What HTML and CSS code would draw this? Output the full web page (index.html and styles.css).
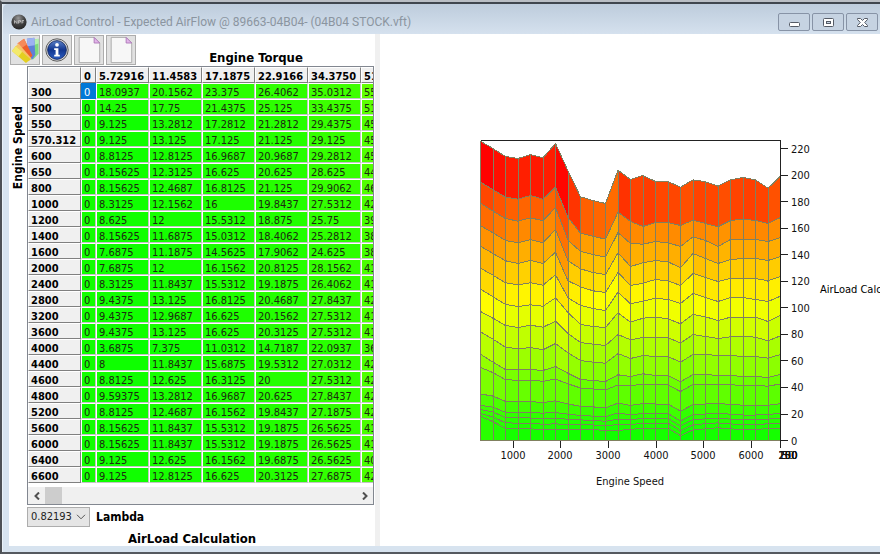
FILE: index.html
```html
<!DOCTYPE html>
<html lang="en">
<head>
<meta charset="utf-8">
<title>AirLoad Control</title>
<link rel="stylesheet" href="styles.css">
</head>
<body>
<div class="window">
  <header class="titlebar">
    <svg class="app-icon" viewBox="0 0 16 16" aria-hidden="true">
      <defs><radialGradient id="ball" cx=".45" cy=".25" r=".8"><stop offset="0" stop-color="#999"/><stop offset=".5" stop-color="#444"/><stop offset="1" stop-color="#222"/></radialGradient></defs>
      <circle cx="8" cy="8" r="7.6" fill="url(#ball)"/>
      <path d="M3.5 9.5V6.5L6 9.5V6.5M7.5 9.5V6.5H9.5V8H7.5M11 9.5V6.5H13M11 8h1.5" stroke="#bbb" stroke-width=".9" fill="none"/>
    </svg>
    <h1>AirLoad Control - Expected AirFlow @ 89663-04B04- (04B04 STOCK.vft)</h1>
    <div class="window-buttons">
      <button aria-label="Minimize"><svg viewBox="0 0 13 11"><rect x="1.5" y="5.5" width="10" height="4" rx="1" fill="#fff" stroke="#555b66"/></svg></button>
      <button aria-label="Maximize"><svg viewBox="0 0 13 11"><rect x="1.5" y="1.5" width="10" height="8" rx="1" fill="#fff" stroke="#555b66"/><rect x="4.5" y="4.5" width="4" height="2" fill="#c6d3e2" stroke="#555b66"/></svg></button>
      <button aria-label="Close"><svg viewBox="0 0 13 11"><path d="M1.5 1.5H4.5L6.5 3.5 8.5 1.5H11.5V2.5L8.7 5.5 11.5 8.5V9.5H8.5L6.5 7.5 4.5 9.5H1.5V8.5L4.3 5.5 1.5 2.5Z" fill="#fff" stroke="#555b66"/></svg></button>
    </div>
  </header>
  <main class="content">
    <section class="table-pane">
      <div class="toolbar">
        <button class="tool" aria-label="Colours">
          <svg viewBox="0 0 30 30">
            <path d="M21 25 24 4 29.500 3V19L24 25Z" fill="#7fdc7f"/>
            <path d="M24 4 29.500 3V8L23.500 10Z" fill="#b6f0b0"/>
            <path d="M20 25 17 3 25 2 26 20 23 25Z" fill="#5f80d8"/>
            <path d="M17 3 25 2 25.500 10 18 11Z" fill="#9db2f2"/>
            <path d="M20 25 7 8 14 3 23 21Z" fill="#ee5f2c"/>
            <path d="M7 8 14 3 17 9 11 13Z" fill="#f58a5a"/>
            <path d="M19 27 4 12 8 8 22 24Z" fill="#f6c46a"/>
            <path d="M1 16 5 11 21 25 16 29Z" fill="#e3cf20"/>
            <path d="M1 16 5 11 12 17 8 22Z" fill="#f3e96c"/>
          </svg>
        </button>
        <button class="tool" aria-label="Information">
          <svg viewBox="0 0 30 30">
            <defs><linearGradient id="info" x2="0" y2="1"><stop offset="0" stop-color="#5a80c8"/><stop offset=".5" stop-color="#12368f"/><stop offset="1" stop-color="#2c5fc4"/></linearGradient></defs>
            <circle cx="15" cy="15" r="12" fill="#d8d8d8" stroke="#555"/>
            <circle cx="15" cy="15" r="10" fill="url(#info)" stroke="#142a66"/>
            <circle cx="15" cy="9.5" r="2" fill="#fff"/>
            <path d="M12 13h4.500v7H18v2h-6v-2h1.500v-5H12Z" fill="#fff"/>
          </svg>
        </button>
        <button class="tool" aria-label="New page">
          <svg viewBox="0 0 30 30"><path d="M4.500 1.500H20.500L26.500 7.500V28.500H4.500Z" fill="#f7f7f7" stroke="#aaa"/><path d="M20.500 1.500V7.500H26.500Z" fill="#e3b5ea" stroke="#ad79b8"/></svg>
        </button>
        <button class="tool" aria-label="Copy page">
          <svg viewBox="0 0 30 30"><path d="M4.500 1.500H20.500L26.500 7.500V28.500H4.500Z" fill="#f7f7f7" stroke="#aaa"/><path d="M20.500 1.500V7.500H26.500Z" fill="#e3b5ea" stroke="#ad79b8"/></svg>
        </button>
        <h2>Engine Torque</h2>
      </div>
      <div class="table-area">
        <div class="row-title"><span>Engine Speed</span></div>
        <div class="table-column">
          <div class="table-frame">
            <div class="table-clip"><table id="airload"><thead></thead><tbody></tbody></table></div>
            <div class="scrollbar">
              <button aria-label="Scroll left"><svg viewBox="0 0 8 8"><path d="M6 0.500 2.500 4 6 7.500" /></svg></button>
              <div class="track"><div class="thumb"></div></div>
              <button aria-label="Scroll right"><svg viewBox="0 0 8 8"><path d="M2 0.500 5.500 4 2 7.500" /></svg></button>
            </div>
          </div>
          <div class="lambda">
            <div class="select-wrap">
              <select id="lambda"><option>0.82193</option></select>
              <svg viewBox="0 0 10 6" aria-hidden="true"><path d="M1 .8 5 4.800 9 .8"/></svg>
            </div>
            <label for="lambda">Lambda</label>
          </div>
          <h2 class="caption">AirLoad Calculation</h2>
        </div>
      </div>
    </section>
    <div class="splitter"></div>
    <section class="chart-pane">
      <svg id="chart" viewBox="380 34 436 512" role="img" aria-label="AirLoad surface chart"></svg>
      <span class="value-title">AirLoad Calculation</span>
    </section>
  </main>
</div>
<script src="script.js"></script>
</body>
</html>
```
FILE: styles.css
```css
* { box-sizing: border-box; }
html, body { height: 100%; margin: 0; overflow: hidden; }
body {
  font: 11px/14px "DejaVu Sans Condensed", "Noto Sans", sans-serif;
  color: #000;
}
button { padding: 0; font: inherit; }
h1, h2 { margin: 0; }
h2 { font-size: 13px; line-height: 14px; }

.window {
  height: 100%;
  display: flex;
  flex-direction: column;
  background: #d7e3ef;
  border-top: 2px solid #b9bec4;
  border-left: 2px solid #4d5055;
  border-bottom: 2px solid #55595f;
  padding: 0 0 6px 7px;
  box-shadow: inset 0 2px #3f464e, inset 1px 0 #e9f1f8;
}
.titlebar {
  flex: none;
  height: 30px;
  margin: 2px 0 0 -6px;
  padding: 6px 2px 0 8px;
  display: flex;
  align-items: center;
  background: linear-gradient(#bdccdc, #d5e1ee);
  border-top-left-radius: 5px;
}
.app-icon { width: 16px; height: 16px; margin-right: 4px; }
.titlebar h1 {
  flex: 1;
  font: 12px/16px Roboto, "Noto Sans", sans-serif;
  color: #8b95a0;
  white-space: nowrap;
}
.window-buttons { display: flex; gap: 2px; }
.window-buttons button {
  width: 32px;
  height: 18px;
  display: grid;
  place-items: center;
  background: #c6d3e2;
  border: 1px solid #8793a6;
  border-radius: 2px;
}
.window-buttons svg { width: 13px; height: 11px; }

.content { flex: 1; min-height: 0; display: flex; background: #fff; }
.table-pane { flex: none; width: 366px; padding: 1px 1px 0; }
.splitter { flex: none; width: 5px; background: #f0f0f0; }

.toolbar { display: flex; gap: 2px; height: 31px; }
.tool { width: 30px; height: 30px; background: #e1e1e1; border: 1px solid #adadad; }
.tool svg { display: block; width: 28px; height: 28px; }
.toolbar h2 { flex: 1; align-self: flex-end; text-align: center; padding-bottom: 1px; }

.table-area { display: flex; }
.row-title { flex: none; width: 17px; padding-top: 40px; }
.row-title span {
  display: block;
  writing-mode: vertical-rl;
  transform: rotate(180deg);
  font-size: 12px;
  line-height: 16px;
  font-weight: bold;
}
.table-column { flex: 1; min-width: 0; }
.table-frame { border: 1px solid #828790; }
.table-clip { overflow: hidden; }
table { width: 386px; table-layout: fixed; border-collapse: separate; border-spacing: 0; }
th, td { height: 16px; padding: 3px 0 0 2px; line-height: 11px; text-align: left; white-space: nowrap; overflow: hidden; }
th {
  background: #f0f0f0;
  border: 1px solid #808080;
  border-top-color: #fff;
  border-left-color: #fff;
}
td { color: #1c2a10; border: 1px solid #c4c4c4; border-top-color: #fff; border-left-color: #fff; }
td.selected { background: #0078d7; color: #fff; border-color: #0078d7; }
.scrollbar { display: flex; height: 17px; margin-top: 4px; background: #f0f0f0; }
.scrollbar button { width: 17px; border: 0; background: none; display: grid; place-items: center; }
.scrollbar svg { width: 8px; height: 8px; fill: none; stroke: #505050; stroke-width: 2; }
.track { flex: 1; display: flex; }
.thumb { width: 5%; min-width: 17px; background: #cdcdcd; }

.lambda { display: flex; align-items: center; gap: 6px; margin-top: 2px; }
.select-wrap { position: relative; }
select {
  display: block;
  appearance: none;
  width: 63px;
  height: 20px;
  padding: 0 3px;
  font: inherit;
  color: #222;
  background: #e5e5e5;
  border: 1px solid #adadad;
  border-radius: 0;
}
.select-wrap svg { position: absolute; right: 4px; top: 7px; width: 10px; height: 6px; fill: none; stroke: #555; pointer-events: none; }
.lambda label { font-size: 12px; font-weight: bold; }
.caption { text-align: center; margin: 5px 17px 0 0; }

.chart-pane { flex: 1; min-width: 0; overflow: hidden; display: flex; align-items: center; }
#chart { flex: none; width: 436px; height: 512px; margin-right: 4px; }
#chart text { font-size: 11px; fill: #111; }
#chart .face { stroke: #808060; stroke-width: 1; shape-rendering: crispEdges; }
#chart .axis { stroke: #222; fill: none; shape-rendering: crispEdges; }
.value-title { flex: none; white-space: nowrap; }
```
FILE: script.js
```js
const torque = ["0", "5.72916", "11.4583", "17.1875", "22.9166", "34.3750", "51.5625"];
const rows = `300 18.0937 20.1562 23.375 26.4062 35.0312 55.0312
500 14.25 17.75 21.4375 25.125 33.4375 51.1875
550 9.125 13.2812 17.2812 21.2812 29.4375 45.75
570.312 9.125 13.125 17.125 21.125 29.125 45.4375
600 8.8125 12.8125 16.9687 20.9687 29.2812 45.5937
650 8.15625 12.3125 16.625 20.625 28.625 44.625
800 8.15625 12.4687 16.8125 21.125 29.9062 46.2187
1000 8.3125 12.1562 16 19.8437 27.5312 42.7187
1200 8.625 12 15.5312 18.875 25.75 39.5312
1400 8.15625 11.6875 15.0312 18.4062 25.2812 38.875
1600 7.6875 11.1875 14.5625 17.9062 24.625 38.0937
2000 7.6875 12 16.1562 20.8125 28.1562 41.7812
2400 8.3125 11.8437 15.5312 19.1875 26.4062 41.1562
2800 9.4375 13.125 16.8125 20.4687 27.8437 42.5625
3200 9.4375 12.9687 16.625 20.1562 27.5312 41.9375
3600 9.4375 13.125 16.625 20.3125 27.5312 41.9375
4000 3.6875 7.375 11.0312 14.7187 22.0937 36.8125
4400 8 11.8437 15.6875 19.5312 27.0312 42.2187
4600 8.8125 12.625 16.3125 20 27.5312 42.4062
4800 9.59375 13.2812 16.9687 20.625 27.8437 42.5625
5200 8.8125 12.4687 16.1562 19.8437 27.1875 42.0937
5600 8.15625 11.8437 15.5312 19.1875 26.5625 41.2812
6000 8.15625 11.8437 15.5312 19.1875 26.5625 41.2812
6400 9.125 12.625 16.1562 19.6875 26.5625 40.9687
6600 9.125 12.8125 16.625 20.3125 27.6875 42.5625`.split("\n").map(r => r.split(" "));

const MAX = 226;
function heat(v) {
  const f = Math.max(0, Math.min(1, v / MAX));
  return `rgb(${Math.round(Math.min(1, 2 * f) * 255)},${Math.round(Math.min(1, 2 - 2 * f) * 255)},0)`;
}

const table = document.getElementById("airload");
const widths = [53, 15, 53, 53, 53, 53, 53, 53];
table.insertAdjacentHTML("afterbegin", "<colgroup>" + widths.map(w => `<col width="${w}">`).join("") + "</colgroup>");
table.tHead.innerHTML = "<tr><th></th>" + torque.map(t => `<th scope="col">${t}</th>`).join("") + "</tr>";
table.tBodies[0].innerHTML = rows.map((r, n) =>
  `<tr><th scope="row">${r[0]}</th><td${n ? ' style="background:#12ff00"' : ' class="selected"'}>0</td>` +
  r.slice(1).map(v => `<td style="background:${heat(v * 0.8)}">${v}</td>`).join("") + "</tr>").join("");

// Higher torque levels, one height per engine speed, in thirds of a pixel above the axis.
const levels = [
  [162,186,208,208,208,211,199,219,238,241,244,224,229,221,226,226,245,223,223,226,226,229,229,232,223].map(v => 421 - v),
  [95,117,141,146,142,149,130,158,181,186,189,160,175,166,169,169,186,163,163,166,166,169,169,174,163].map(v => 421 - v),
  [34,54,76,82,75,81,63,100,127,132,136,103,119,112,112,112,129,103,109,115,110,108,111,122,107].map(v => 421 - v),
  [-33,-10,13,19,14,18,-7,37,73,79,82,38,66,54,51,56,71,43,50,61,51,51,51,64,45].map(v => 421 - v),
  [414,435,458,464,458,465,434,503,526,535,541,486,521,513,504,508,520,490,502,514,502,502,508,514,498].map(v => 931 - v),
  [348,370,392,400,391,400,366,452,470,482,487,427,466,459,448,452,466,430,442,454,445,445,445,452,439].map(v => 931 - v),
  [287,308,331,338,328,338,298,392,416,427,433,368,409,398,391,395,413,370,385,400,388,385,385,391,379].map(v => 931 - v),
  [219,243,265,273,263,272,232,330,364,373,381,307,340,342,334,338,349,320,331,349,328,328,328,334,322].map(v => 931 - v),
  [156,179,201,207,196,207,171,262,309,318,327,246,274,289,277,277,286,270,280,290,271,267,271,280,262].map(v => 931 - v),
  [33,55,79,85,73,83,40,122,200,211,220,120,148,136,154,154,171,149,155,168,149,142,149,174,138].map(v => 931 - v)
];
const BASE = 440.5, LEFT = 480.5, STEP = 12.5, SCALE = 300 / MAX;
const curves = [rows.map(() => 0)];
for (let c = 1; c <= 6; c++) curves.push(rows.map(r => Number(r[c])));
levels.forEach(l => curves.push(l.map(h => h / 3 / SCALE)));

const x = i => LEFT + i * STEP;
const y = v => (BASE - v * SCALE).toFixed(1);
let out = "";
for (let c = 1; c < curves.length; c++) {
  for (let i = 0; i < 24; i++) {
    const lo = curves[c - 1], hi = curves[c];
    out += `<polygon class="face" fill="${heat(hi[i])}" points="${x(i)},${y(lo[i])} ${x(i)},${y(hi[i])} ${x(i + 1)},${y(hi[i + 1])} ${x(i + 1)},${y(lo[i + 1])}"/>`;
  }
}
out += `<path class="axis" d="M480.500 140.500H780.500V440.500"/>`;
for (let v = 0; v <= 220; v += 20) {
  out += `<path class="axis" d="M780 ${y(v)}h8"/><text x="791" y="${Math.round(y(v)) + 4}">${v}</text>`;
}
for (let s = 1000; s <= 6000; s += 1000) {
  const px = Math.round(LEFT + (s - 300) / 6300 * 300) - 1;
  out += `<path class="axis" d="M${px}.500 441v7"/><text x="${px}" y="459" text-anchor="middle">${s}</text>`;
}
out += `<path class="axis" d="M780.500 441v7"/>`;
// The torque axis is seen end-on, so its labels share one place.
["50", "100", "150", "200", "250"].forEach(t => { out += `<text x="788" y="459" text-anchor="middle">${t}</text>`; });
out += `<text x="630" y="485" text-anchor="middle">Engine Speed</text>`;
document.getElementById("chart").innerHTML = out;
```
